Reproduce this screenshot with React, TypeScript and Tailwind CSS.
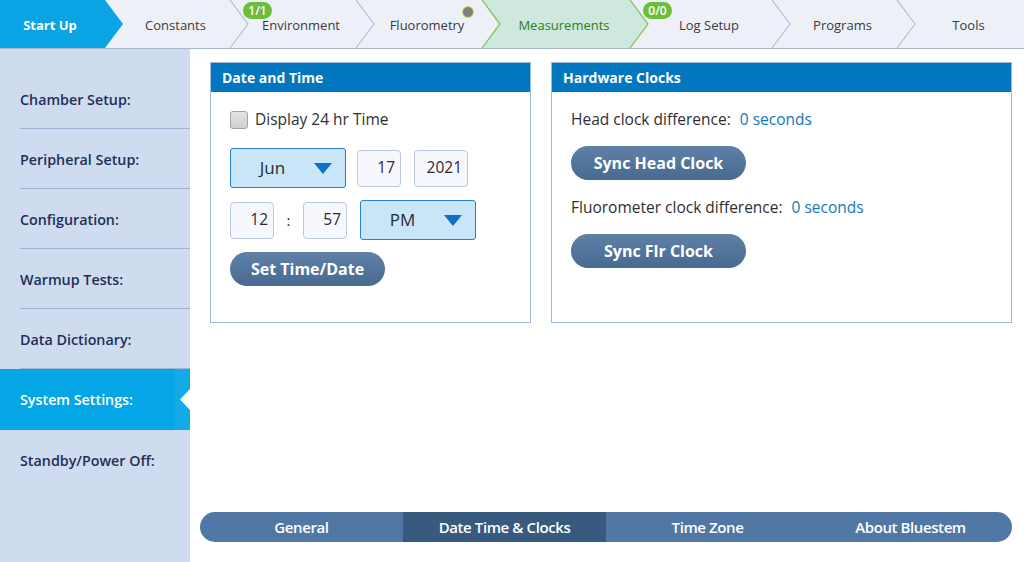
import React from 'react';

type Crumb = {
    label: string;
    width: string;
    kind?: 'start' | 'active';
    sepColor?: string;
    badge?: string;
    dot?: boolean;
};

const crumbs: Crumb[] = [
    { label: 'Start Up', width: 'w-[105px]', kind: 'start' },
    { label: 'Constants', width: 'w-[125px]' },
    { label: 'Environment', width: 'w-[126px]', badge: '1/1' },
    { label: 'Fluorometry', width: 'w-[126px]', dot: true, sepColor: '#7cc04a' },
    { label: 'Measurements', width: 'w-[148px]', kind: 'active', sepColor: '#7cc04a' },
    { label: 'Log Setup', width: 'w-[142px]', badge: '0/0' },
    { label: 'Programs', width: 'w-[125px]' },
    { label: 'Tools', width: 'flex-1' },
];

const sideItems = [
    'Chamber Setup:',
    'Peripheral Setup:',
    'Configuration:',
    'Warmup Tests:',
    'Data Dictionary:',
    'System Settings:',
    'Standby/Power Off:',
];

const tabs = ['General', 'Date Time & Clocks', 'Time Zone', 'About Bluestem'];

const CrumbItem = ({ crumb, last }: { crumb: Crumb; last: boolean }) => {
    const isStart = crumb.kind === 'start';
    const isActive = crumb.kind === 'active';
    return (
        <div className={`relative h-full shrink-0 ${crumb.width}`}>
            {isStart && <div className="absolute inset-0 bg-[#0aa3e3]" />}
            {isActive && (
                <div className="absolute inset-0 bg-[#cfe8dd] [clip-path:polygon(0_0,100%_0,100%_100%,0_100%,16px_50%)]" />
            )}
            <div
                className={`relative z-20 flex h-full items-center justify-center pt-[3px] text-[13px] ${
                    isStart
                        ? 'pr-[5px] font-bold text-white'
                        : isActive
                          ? 'pl-[16px] text-[#2f7d1f]'
                          : 'pl-[16px] text-[#3a3a3e]'
                }`}
            >
                {crumb.label}
            </div>
            {crumb.badge && (
                <div className="absolute left-[13px] top-[2px] z-30 flex h-[17px] w-[29px] items-center justify-center rounded-full bg-[#6cbd3b] text-[12px] font-semibold leading-none text-white">
                    {crumb.badge}
                </div>
            )}
            {crumb.dot && (
                <div className="absolute right-[8px] top-[6px] z-30 h-[12px] w-[12px] rounded-full border border-[#efd64a] bg-[#7f7f86]" />
            )}
            {!last && (
                <svg
                    className="absolute left-full top-0 z-10 h-12 w-[19px] overflow-visible"
                    viewBox="0 0 19 48"
                >
                    {isStart && <polygon points="-1,0 0,0 18,24 0,48 -1,48" fill="#0aa3e3" />}
                    {isActive && <polygon points="-1,0 0,0 18,24 0,48 -1,48" fill="#cfe8dd" />}
                    {!isStart && (
                        <polyline
                            points="0,0 18,24 0,48"
                            fill="none"
                            stroke={crumb.sepColor ?? '#a9bfe0'}
                            strokeWidth="1.2"
                        />
                    )}
                </svg>
            )}
        </div>
    );
};

const Triangle = () => (
    <svg width="18" height="11" viewBox="0 0 18 11">
        <polygon points="0,0 18,0 9,11" fill="#0b72c5" />
    </svg>
);

const Select = ({ value, width }: { value: string; width: string }) => (
    <div
        className={`flex h-[40px] items-center rounded-[3px] border border-[#2b82c4] bg-[#c8e6f8] pr-[13px] ${width}`}
    >
        <span className="flex-1 text-center text-[17px] text-[#2b2b2e]">{value}</span>
        <Triangle />
    </div>
);

const NumBox = ({ value, width }: { value: string; width: string }) => (
    <div
        className={`flex h-[37px] items-center justify-end rounded-[4px] border border-[#b8c9e0] bg-[#f6f8fd] pr-[5px] text-[15.5px] text-[#2b2b2e] ${width}`}
    >
        {value}
    </div>
);

const PillButton = ({ label, width }: { label: string; width: string }) => (
    <button
        className={`flex h-[34px] items-center justify-center rounded-full bg-linear-to-b from-[#5f81a7] to-[#486a90] text-[16px] font-bold text-white ${width}`}
    >
        {label}
    </button>
);

const Panel = ({ title, className, children }: { title: string; className: string; children: React.ReactNode }) => (
    <div className={`flex h-[261px] flex-col border border-[#9dbbdb] ${className}`}>
        <div className="flex h-[29px] shrink-0 items-center bg-[#0276be] px-[11px] text-[14px] font-bold text-white">
            {title}
        </div>
        {children}
    </div>
);

export default function App() {
    return (
        <div className="flex h-[562px] w-[1024px] flex-col overflow-hidden bg-white font-['Open_Sans',sans-serif]">
            {/* breadcrumb bar */}
            <div className="flex h-[49px] shrink-0 border-b border-[#a8b9cf] bg-[#eef0f8]">
                {crumbs.map((c, i) => (
                    <CrumbItem key={c.label} crumb={c} last={i === crumbs.length - 1} />
                ))}
            </div>

            <div className="flex min-h-0 flex-1">
                {/* sidebar */}
                <div className="w-[190px] shrink-0 bg-[#cfdcef] pt-[20px]">
                    {sideItems.map((item, i) => {
                        const selected = item === 'System Settings:';
                        return (
                            <div
                                key={item}
                                className={`relative flex items-center pl-[20px] text-[14.3px] font-semibold ${
                                    selected ? 'h-[61px] bg-[#05a6e6] pt-[1px] text-white' : 'h-[60px] pt-[1px] text-[#1f2f57]'
                                }`}
                            >
                                {item}
                                {!selected && i < sideItems.length - 1 && sideItems[i + 1] !== 'System Settings:' && (
                                    <div className="absolute bottom-0 left-[20px] right-0 h-px bg-[#9fb4d3]" />
                                )}
                                {sideItems[i + 1] === 'System Settings:' && (
                                    <div className="absolute bottom-0 left-[20px] right-0 h-px bg-[#9fb4d3]" />
                                )}
                                {selected && (
                                    <>
                                        <div className="absolute bottom-0 right-0 top-0 w-[15px] bg-[#14aae8]" />
                                        <svg className="absolute right-0 top-[20px]" width="10" height="21" viewBox="0 0 10 21">
                                            <polygon points="10,0 0,10.5 10,21" fill="#ffffff" />
                                        </svg>
                                    </>
                                )}
                            </div>
                        );
                    })}
                </div>

                {/* main */}
                <div className="flex flex-1 flex-col">
                    <div className="flex gap-[20px] pl-[20px] pr-[12px] pt-[13px]">
                        <Panel title="Date and Time" className="w-[321px]">
                            <div className="flex flex-col pl-[19px] pt-[19px]">
                                <div className="flex h-[18px] items-center gap-[7px]">
                                    <div className="h-[18px] w-[18px] rounded-[3px] border border-[#a3a3a6] bg-linear-to-b from-[#e4e4e6] to-[#cfcfd2]" />
                                    <span className="text-[15.5px] text-[#2f2f33]">Display 24 hr Time</span>
                                </div>
                                <div className="mt-[19px] flex items-center">
                                    <Select value="Jun" width="w-[116px]" />
                                    <div className="ml-[11px]">
                                        <NumBox value="17" width="w-[44px]" />
                                    </div>
                                    <div className="ml-[13px]">
                                        <NumBox value="2021" width="w-[54px]" />
                                    </div>
                                </div>
                                <div className="mt-[12px] flex items-center">
                                    <NumBox value="12" width="w-[44px]" />
                                    <span className="w-[29px] text-center text-[15px] text-[#2f2f33]">:</span>
                                    <NumBox value="57" width="w-[44px]" />
                                    <div className="ml-[13px]">
                                        <Select value="PM" width="w-[116px]" />
                                    </div>
                                </div>
                                <div className="mt-[12px]">
                                    <PillButton label="Set Time/Date" width="w-[155px]" />
                                </div>
                            </div>
                        </Panel>

                        <Panel title="Hardware Clocks" className="flex-1">
                            <div className="flex flex-col pl-[19px] pt-[18px]">
                                <div className="flex h-[20px] items-center text-[15.5px] text-[#2f2f33]">
                                    Head clock difference:
                                    <span className="ml-[9px] text-[#1577c0]">0 seconds</span>
                                </div>
                                <div className="mt-[16px]">
                                    <PillButton label="Sync Head Clock" width="w-[175px]" />
                                </div>
                                <div className="mt-[18px] flex h-[20px] items-center text-[15.5px] text-[#2f2f33]">
                                    Fluorometer clock difference:
                                    <span className="ml-[9px] text-[#1577c0]">0 seconds</span>
                                </div>
                                <div className="mt-[16px]">
                                    <PillButton label="Sync Flr Clock" width="w-[175px]" />
                                </div>
                            </div>
                        </Panel>
                    </div>

                    {/* bottom tabs */}
                    <div className="mb-[20px] ml-[10px] mr-[12px] mt-auto flex h-[30px] overflow-hidden rounded-full bg-[#5177a4]">
                        {tabs.map((t) => (
                            <div
                                key={t}
                                className={`flex flex-1 items-center justify-center text-[15px] font-semibold tracking-[-0.4px] text-white ${
                                    t === 'Date Time & Clocks' ? 'bg-[#375a7e]' : ''
                                }`}
                            >
                                {t}
                            </div>
                        ))}
                    </div>
                </div>
            </div>
        </div>
    );
}
